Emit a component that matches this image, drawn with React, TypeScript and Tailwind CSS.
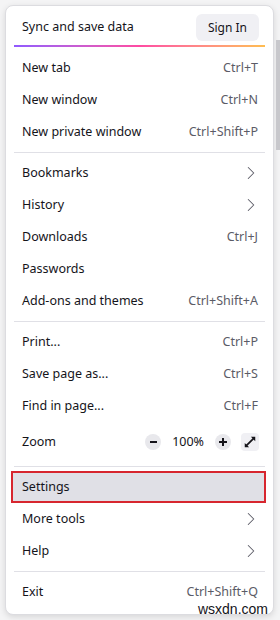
import { ChevronRight } from 'lucide-react';

type Row = { label: string; shortcut?: string; sub?: boolean };

const FONT = { fontFamily: '"Noto Sans", "Open Sans", sans-serif' };

function MenuRow({ label, shortcut, sub }: Row) {
    return (
        <div className="flex h-8 items-center justify-between pl-4 pr-[15px]">
            <span className="text-[#15141a]">{label}</span>
            {shortcut && <span className="text-[#5b5b66]">{shortcut}</span>}
            {sub && <ChevronRight size={22} strokeWidth={1.1} className="-mr-[4px] text-[#5b5b66]" />}
        </div>
    );
}

function Separator() {
    return <div className="mx-2 my-1 h-px bg-[#e0e0e6]" />;
}

function ExpandIcon() {
    // 양방향 대각선 화살표 (전체 화면)
    return (
        <svg width="14" height="14" viewBox="0 0 16 16">
            <path d="M3.5 12.5 12.5 3.5" stroke="#15141a" strokeWidth="2" />
            <path d="M9 2h5v5z" fill="#15141a" />
            <path d="M2 9v5h5z" fill="#15141a" />
        </svg>
    );
}

export default function App() {
    return (
        <div className="relative h-[620px] w-[280px] overflow-hidden bg-[#f4f4f5] text-[12.5px]" style={FONT}>
            {/* 오른쪽 스크롤바 */}
            <div className="absolute right-0 top-[40px] h-[110px] w-[4px] bg-[#c8c8cc]" />

            <div className="ml-[5px] mt-[5px] w-[269px] rounded-lg border border-[#dcdce0] bg-white pb-[6px] shadow-[0_2px_6px_rgba(0,0,0,0.12)]">
                {/* 동기화 헤더 */}
                <div className="flex items-center justify-between pb-[4px] pl-4 pr-[14px] pt-[8px]">
                    <span className="text-[#15141a]">Sync and save data</span>
                    <button className="h-[27px] rounded-md bg-[#f0f0f4] px-[12px] text-[12px] text-[#15141a]">Sign In</button>
                </div>
                <div className="mx-2 h-[2px] bg-gradient-to-r from-[#9059ff] via-[#ff4aa2] to-[#ffbd4f]" />
                <div className="h-[5px]" />

                <MenuRow label="New tab" shortcut="Ctrl+T" />
                <MenuRow label="New window" shortcut="Ctrl+N" />
                <MenuRow label="New private window" shortcut="Ctrl+Shift+P" />
                <Separator />
                <MenuRow label="Bookmarks" sub />
                <MenuRow label="History" sub />
                <MenuRow label="Downloads" shortcut="Ctrl+J" />
                <MenuRow label="Passwords" />
                <MenuRow label="Add-ons and themes" shortcut="Ctrl+Shift+A" />
                <Separator />
                <MenuRow label="Print..." shortcut="Ctrl+P" />
                <MenuRow label="Save page as..." shortcut="Ctrl+S" />
                <MenuRow label="Find in page..." shortcut="Ctrl+F" />

                {/* 확대/축소 */}
                <div className="flex h-10 items-center justify-between pl-4 pr-[14px]">
                    <span className="text-[#15141a]">Zoom</span>
                    <div className="flex items-center">
                        <div className="flex h-4 w-4 items-center justify-center rounded-full bg-[#e8e8ec]">
                            <div className="h-[1.5px] w-[7px] bg-[#15141a]" />
                        </div>
                        <span className="mx-[11px] text-[#15141a]">100%</span>
                        <div className="relative flex h-4 w-4 items-center justify-center rounded-full bg-[#e8e8ec]">
                            <div className="h-[1.5px] w-[8px] bg-[#15141a]" />
                            <div className="absolute h-[8px] w-[1.5px] bg-[#15141a]" />
                        </div>
                        <div className="ml-[10px] flex h-[18px] w-[18px] items-center justify-center rounded-sm bg-[#f0f0f4]">
                            <ExpandIcon />
                        </div>
                    </div>
                </div>
                <Separator />

                {/* 선택된 항목 */}
                <div className="ml-[5px] mr-[7px] flex h-8 items-center border-2 border-[#d7262f] bg-[#e0e0e6] pl-[9px]">
                    <span className="text-[#15141a]">Settings</span>
                </div>
                <MenuRow label="More tools" sub />
                <MenuRow label="Help" sub />
                <Separator />
                <MenuRow label="Exit" shortcut="Ctrl+Shift+Q" />
            </div>

            {/* 워터마크 */}
            <span className="absolute bottom-[4px] right-[12px] text-[14px] leading-none text-[#15141a]" style={{ fontFamily: '"Liberation Sans", sans-serif' }}>
                wsxdn.com
            </span>
        </div>
    );
}
